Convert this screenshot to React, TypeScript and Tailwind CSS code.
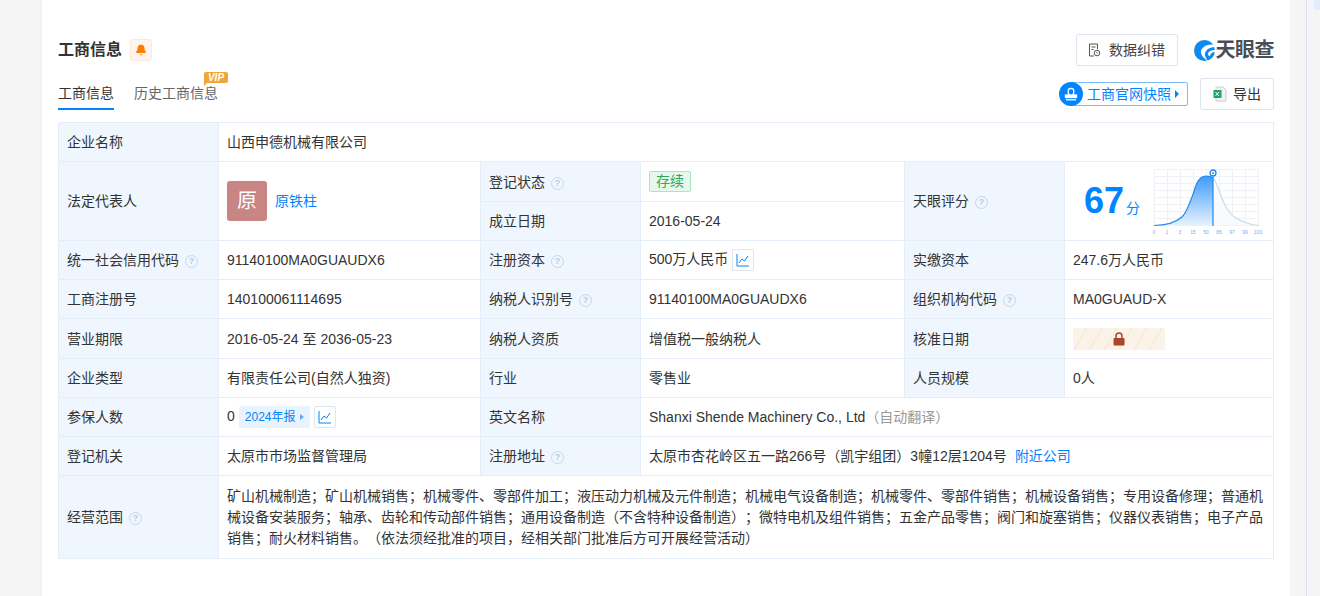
import { Bell } from 'lucide-react'

const th = 'border border-[#e4eef8] bg-[#eff6fd] px-2 text-left font-normal text-[#333]'
const td = 'border border-[#e4eef8] bg-white px-2 text-left font-normal text-[#333]'

function Help() {
  return (
    <span className="ml-1.5 inline-flex h-[13px] w-[13px] items-center justify-center rounded-full border-[1.5px] border-[#c3d9ec] align-[1px] text-[9px] font-bold leading-none text-[#b3cfe6]">
      ?
    </span>
  )
}

function TrendButton() {
  return (
    <span className="ml-1 inline-flex h-[22px] w-[22px] items-center justify-center rounded-[2px] border border-[#e0e6f0] align-middle">
      <svg width="14" height="14" viewBox="0 0 14 14" fill="none" stroke="#0084ff" strokeWidth="1">
        <path d="M1 1v12h12" />
        <path d="M3 10l3-4 2.5 2L12 3" />
      </svg>
    </span>
  )
}

function Logo() {
  return (
    <div className="flex items-center">
      <svg width="21" height="21" viewBox="0 0 21 21">
        <circle cx="10.5" cy="10.5" r="10.5" fill="#0d8bf2" />
        <path d="M21 5C13 3 6 8 7 13C8 17 11 19 14 21C11 17 10 14 12 11C14 8 18 7 21 7Z" fill="#fff" />
        <path d="M21 10C17 10 14 12 14 14C14 15 15 16 16 16C16 14 18 12 21 12Z" fill="#fff" />
      </svg>
      <span className="ml-px text-[20px] font-bold leading-none tracking-[-0.5px] text-[#4a4f57]">天眼查</span>
    </div>
  )
}

function ScoreChart() {
  const vs = [0, 13, 26, 39, 52, 65, 78, 91, 104]
  const hs = [0, 7, 14, 21, 28, 35, 42, 49, 56]
  const labels = ['0', '1', '3', '15', '50', '85', '97', '99', '100']
  const left = 'M3 59.500C18 59.500 25 56 31 51C36 46 38 38 41 31C43 26 44 21 46 17C48 13 51 10 55 10C58 10 60 10.500 62 12'
  const right = 'M62 12C65 15 66 20 68 24C70 30 72 36 75 41C78 46 81 50 85 52C92 56 100 59 108 59.500'
  return (
    <svg width="112" height="72" viewBox="0 0 112 72">
      <defs>
        <linearGradient id="fill" x1="0" y1="0" x2="0" y2="1">
          <stop offset="0" stopColor="#3e9bfb" />
          <stop offset="1" stopColor="#e6f2fe" />
        </linearGradient>
      </defs>
      {vs.map((x) => (
        <line key={x} x1={x + 3.5} x2={x + 3.5} y1="3" y2="60" stroke="#eef2f7" />
      ))}
      {hs.map((y) => (
        <line key={y} x1="3" x2="108" y1={y + 3.5} y2={y + 3.5} stroke="#eef2f7" />
      ))}
      <path d={`${left}L62 59.500Z`} fill="url(#fill)" />
      <path d={`${right}L62 59.500Z`} fill="#f8fafc" />
      <path d={right} fill="none" stroke="#ccdbea" strokeWidth="1.2" />
      <path d={left} fill="none" stroke="#1e88f0" strokeWidth="1.2" />
      <line x1="62" x2="62" y1="11" y2="60" stroke="#1e88f0" strokeWidth="1.2" />
      <circle cx="62" cy="7" r="3" fill="#fff" stroke="#1e88f0" strokeWidth="1.300" />
      <circle cx="62" cy="7" r="0.900" fill="#1e88f0" />
      {labels.map((l, i) => (
        <text key={i} x={3 + i * 13} y="67.500" fontSize="5" textAnchor="middle" fill="#6fb2f5" fontFamily="Liberation Sans, sans-serif">
          {l}
        </text>
      ))}
    </svg>
  )
}

export default function App() {
  return (
    <div
      className="flex h-[596px] w-[1320px] overflow-hidden bg-[#f5f5f5] text-[14px] text-[#333] [text-spacing-trim:space-all]"
      style={{ fontFamily: '"Liberation Sans", "Noto Sans CJK SC", sans-serif' }}
    >
      <div className="w-[42px] shrink-0 border-r border-[#efefef]" />
      <div className="w-[1248px] shrink-0 bg-white px-4 pt-[34px]">
        <div className="flex h-[32px] items-center justify-between">
          <div className="flex items-center">
            <span className="text-[16px] font-bold text-[#333]">工商信息</span>
            <span className="ml-2 flex h-[22px] w-[22px] items-center justify-center rounded-[3px] border border-[#ffe8d6] bg-[#fff5ee]">
              <Bell size={12} fill="#ff7a00" stroke="#ff7a00" />
            </span>
          </div>
          <div className="flex items-center">
            <span className="flex h-[32px] w-[102px] items-center justify-center rounded-[2px] border border-[#e0e6f0] text-[#444]">
              <svg width="13" height="14" viewBox="0 0 13 14" fill="none" stroke="#555" className="mr-2">
                <path d="M6 13H1.500V1h8v5" />
                <path d="M3.500 4h4M3.500 6.500h2" />
                <circle cx="9" cy="10" r="2.800" />
                <path d="M9 8.800v1.600" />
              </svg>
              数据纠错
            </span>
            <span className="ml-4">
              <Logo />
            </span>
          </div>
        </div>
        <div className="mt-[12px] flex h-[32px] items-start justify-between">
          <div className="flex">
            <div className="h-[32px] border-b-2 border-[#0084ff] pt-[5px] text-[#333]">工商信息</div>
            <div className="relative ml-5 pt-[5px] text-[#666]">
              历史工商信息
              <span className="absolute -top-[6px] -right-[10px] flex h-[11px] w-[24px] items-center justify-center rounded-[2px] rounded-bl-none bg-[#f0a63c] text-[10px] font-bold italic leading-none text-white">
                VIP
                <span className="absolute left-0 top-full h-0 w-0 border-t-[3px] border-r-[3px] border-t-[#f0a63c] border-r-transparent" />
              </span>
            </div>
          </div>
          <div className="flex items-center">
            <div className="relative flex h-[24px] w-[119px] items-center rounded-[2px] border border-[#7dbcf8] pl-[17px] text-[#0084ff]">
              工商官网快照
              <span className="ml-1 h-0 w-0 border-y-[4px] border-l-[4px] border-y-transparent border-l-[#0084ff]" />
              <span className="absolute -left-[11px] top-[-1px] flex h-[24px] w-[24px] items-center justify-center rounded-full bg-[#0084ff]">
                <svg width="14" height="14" viewBox="0 0 14 14" fill="none" stroke="#fff" strokeWidth="1.300">
                  <path d="M5.200 8C4 6.500 4 3.500 4.600 2.300 5.200 1.200 8.800 1.200 9.400 2.300 10 3.500 10 6.500 8.800 8" />
                  <rect x="1.500" y="8" width="11" height="2.500" fill="#fff" />
                  <path d="M2 12.800h10" />
                </svg>
              </span>
            </div>
            <span className="ml-3 flex h-[32px] w-[74px] items-center justify-center rounded-[2px] border border-[#e0e6f0] text-[#333]">
              <svg width="14" height="16" viewBox="0 0 14 16" className="mr-[6px]">
                <path d="M3 1h7l3 3v11H3z" fill="#f0f2f4" stroke="#c9ced4" />
                <rect x="0.500" y="4" width="8" height="8" fill="#21a366" />
                <path d="M2.500 6l3.500 4M6 6l-3.500 4" stroke="#fff" />
              </svg>
              导出
            </span>
          </div>
        </div>
        <table className="mt-[12px] w-[1215px] table-fixed border-collapse">
          <colgroup>
            <col className="w-[160px]" />
            <col className="w-[262px]" />
            <col className="w-[160px]" />
            <col className="w-[264px]" />
            <col className="w-[160px]" />
            <col className="w-[209px]" />
          </colgroup>
          <tbody>
            <tr className="h-[39px]">
              <th className={th}>企业名称</th>
              <td className={td} colSpan={5}>山西申德机械有限公司</td>
            </tr>
            <tr className="h-[40px]">
              <th className={th} rowSpan={2}>法定代表人</th>
              <td className={td} rowSpan={2}>
                <div className="flex items-center">
                  <span className="flex h-10 w-10 items-center justify-center rounded-[3px] bg-[#c98583] text-[20px] text-white">原</span>
                  <span className="ml-2 text-[#0084ff]">原铁柱</span>
                </div>
              </td>
              <th className={`${th} pt-px`}>登记状态<Help /></th>
              <td className={td}>
                <span className="inline-block h-[21px] rounded-[2px] border border-[#a8e6c0] bg-[#e6f8ec] px-[6px] text-[14px] leading-[19px] text-[#2fa85e]">存续</span>
              </td>
              <th className={th} rowSpan={2}>天眼评分<Help /></th>
              <td className={td} rowSpan={2}>
                <div className="flex items-center justify-between">
                  <div className="ml-[11px] flex items-center">
                    <span className="text-[36px] font-bold leading-none text-[#0084ff]">67</span>
                    <span className="ml-[2px] mt-[14px] text-[14px] text-[#0084ff]">分</span>
                  </div>
                  <div className="mr-[2px] mt-[2px]">
                    <ScoreChart />
                  </div>
                </div>
              </td>
            </tr>
            <tr className="h-[39px]">
              <th className={th}>成立日期</th>
              <td className={td}>2016-05-24</td>
            </tr>
            <tr className="h-[39px]">
              <th className={th}>统一社会信用代码<Help /></th>
              <td className={td}>91140100MA0GUAUDX6</td>
              <th className={th}>注册资本<Help /></th>
              <td className={td}>500万人民币<TrendButton /></td>
              <th className={th}>实缴资本</th>
              <td className={td}>247.6万人民币</td>
            </tr>
            <tr className="h-[39px]">
              <th className={th}>工商注册号</th>
              <td className={td}>140100061114695</td>
              <th className={th}>纳税人识别号<Help /></th>
              <td className={td}>91140100MA0GUAUDX6</td>
              <th className={th}>组织机构代码<Help /></th>
              <td className={td}>MA0GUAUD-X</td>
            </tr>
            <tr className="h-[40px] [&>*]:pt-px">
              <th className={th}>营业期限</th>
              <td className={td}>2016-05-24 至 2036-05-23</td>
              <th className={th}>纳税人资质</th>
              <td className={td}>增值税一般纳税人</td>
              <th className={th}>核准日期</th>
              <td className={td}>
                <span className="flex h-[22px] w-[92px] items-center justify-center rounded-[2px] bg-[repeating-linear-gradient(120deg,#fbf2e8_0px,#fbf2e8_11px,#f8ecdf_11px,#f8ecdf_13px)]">
                  <svg width="12" height="14" viewBox="0 0 12 14">
                    <path d="M3 6V4a3 3 0 0 1 6 0v2" fill="none" stroke="#a8452a" strokeWidth="1.500" />
                    <rect x="0.500" y="6" width="11" height="7.500" rx="1" fill="#a8452a" />
                  </svg>
                </span>
              </td>
            </tr>
            <tr className="h-[39px]">
              <th className={th}>企业类型</th>
              <td className={td}>有限责任公司(自然人独资)</td>
              <th className={th}>行业</th>
              <td className={td}>零售业</td>
              <th className={th}>人员规模</th>
              <td className={td}>0人</td>
            </tr>
            <tr className="h-[39px]">
              <th className={th}>参保人数</th>
              <td className={td}>
                0
                <span className="ml-1 inline-flex h-[22px] items-center rounded-[2px] bg-[#e8f3fe] px-[6px] align-middle text-[12px] text-[#0084ff]">
                  2024年报
                  <span className="ml-1 h-0 w-0 border-y-[3.5px] border-l-[4px] border-y-transparent border-l-[#5ca9f5]" />
                </span>
                <TrendButton />
              </td>
              <th className={th}>英文名称</th>
              <td className={td} colSpan={3}>
                Shanxi Shende Machinery Co., Ltd<span className="text-[#999]">（自动翻译）</span>
              </td>
            </tr>
            <tr className="h-[39px]">
              <th className={th}>登记机关</th>
              <td className={td}>太原市市场监督管理局</td>
              <th className={th}>注册地址<Help /></th>
              <td className={td} colSpan={3}>
                太原市杏花岭区五一路266号（凯宇组团）3幢12层1204号<span className="ml-2 text-[#0084ff]">附近公司</span>
              </td>
            </tr>
            <tr className="h-[83px]">
              <th className={th}>经营范围<Help /></th>
              <td className={`${td} leading-[21px]`} colSpan={5}>
                矿山机械制造；矿山机械销售；机械零件、零部件加工；液压动力机械及元件制造；机械电气设备制造；机械零件、零部件销售；机械设备销售；专用设备修理；普通机械设备安装服务；轴承、齿轮和传动部件销售；通用设备制造（不含特种设备制造）；微特电机及组件销售；五金产品零售；阀门和旋塞销售；仪器仪表销售；电子产品销售；耐火材料销售。（依法须经批准的项目，经相关部门批准后方可开展经营活动）
              </td>
            </tr>
          </tbody>
        </table>
      </div>
      <div className="w-[16px] shrink-0" />
      <div className="w-px shrink-0 bg-[#d9e2f0]" />
      <div className="flex-1">
        <div className="ml-[7px] h-[10px] bg-[#e3eefb]" />
      </div>
    </div>
  )
}
